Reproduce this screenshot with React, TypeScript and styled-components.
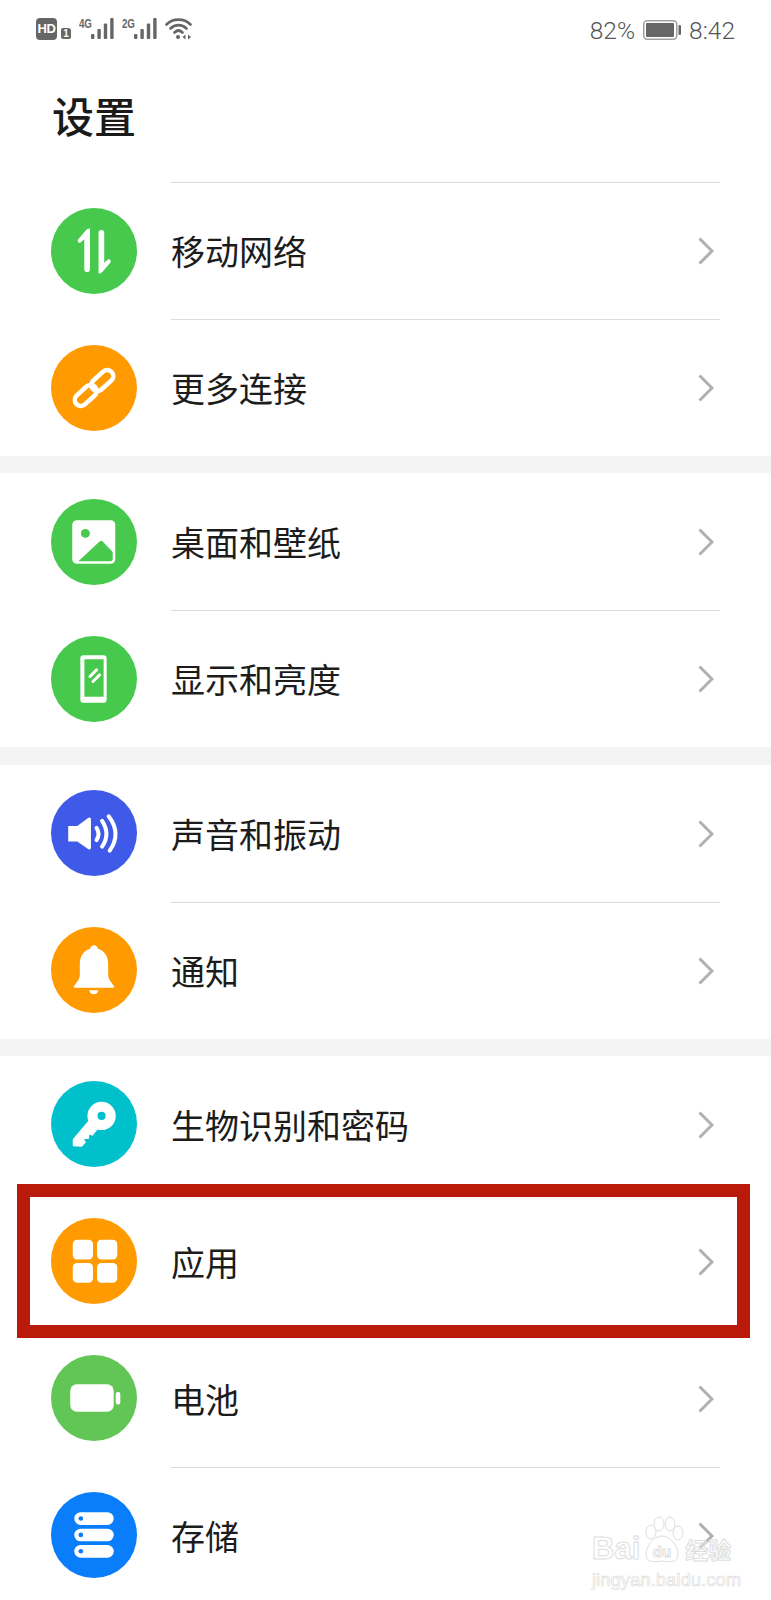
import React from 'react'
import styled, { createGlobalStyle } from 'styled-components'

const GlobalStyle = createGlobalStyle`
  html, body {
    margin: 0;
    padding: 0;
    background: #fff;
  }
  body {
    font-family: "Noto Sans CJK SC", "Noto Sans", sans-serif;
  }
`

const Page = styled.div`
  position: relative;
  width: 771px;
  height: 1600px;
  overflow: hidden;
  background: #fff;
`

const StatusBar = styled.div`
  height: 60px;
  padding: 18px 36px 0;
  box-sizing: border-box;
  display: flex;
  justify-content: space-between;
  align-items: flex-start;
  color: #666;
`

const StatusLeft = styled.div`
  display: flex;
  align-items: flex-start;
`

const StatusRight = styled.div`
  display: flex;
  align-items: center;
  height: 24px;
  font-family: Roboto, "Liberation Sans", sans-serif;
  font-size: 24.5px;
  font-weight: 300;
  color: #555;
  gap: 8px;
`

const HdBadge = styled.div`
  width: 21px;
  height: 22px;
  border-radius: 4px;
  background: #666;
  color: #fff;
  font-family: "Liberation Sans", sans-serif;
  font-weight: 700;
  font-size: 13px;
  line-height: 22px;
  text-align: center;
  letter-spacing: -0.5px;
`

const SimBadge = styled.div`
  width: 10px;
  height: 11px;
  margin: 10px 8px 0 4px;
  border-radius: 2px 3px 2px 2px;
  background: #666;
  color: #fff;
  font-family: "Liberation Sans", sans-serif;
  font-weight: 700;
  font-size: 10px;
  line-height: 11px;
  text-align: center;
`

const Signal = styled.div`
  display: flex;
  align-items: flex-start;
  margin-right: 8px;
`

const NetLabel = styled.span`
  width: 12px;
  font-family: "Liberation Sans", sans-serif;
  font-weight: 700;
  font-size: 13px;
  line-height: 11px;
  letter-spacing: -0.3px;
  color: #666;
  transform: scaleX(0.75);
  transform-origin: left top;
`

const Title = styled.h1`
  margin: 0;
  height: 122px;
  padding: 32px 0 0 52px;
  box-sizing: border-box;
  font-size: 42px;
  line-height: 46px;
  font-weight: 500;
  color: #1a1a1a;
`

const Band = styled.div`
  height: 17.3px;
  background: #f4f4f4;
`

const Row = styled.div`
  position: relative;
  height: 137px;
  display: flex;
  align-items: stretch;
  padding: 0 51px 0 51px;
`

const Circle = styled.div<{ $color: string }>`
  flex: none;
  align-self: center;
  width: 86px;
  height: 86px;
  margin-right: 34px;
  border-radius: 50%;
  background: ${p => p.$color};
  svg {
    display: block;
  }
`

const RowBody = styled.div<{ $plain?: boolean }>`
  flex: 1;
  display: flex;
  align-items: center;
  justify-content: space-between;
  padding-right: 6px;
  border-top: 1px solid ${p => (p.$plain ? 'transparent' : '#dcdcdc')};
`

const RowLabel = styled.span`
  font-size: 34px;
  line-height: 44px;
  color: #1c1c1c;
`

const Chevron = styled.svg`
  display: block;
  width: 16px;
  height: 28px;
`

const Highlight = styled.div`
  position: absolute;
  z-index: 2;
  top: -9px;
  bottom: -8px;
  left: 17px;
  right: 21px;
  border: 13px solid #ba1a0a;
  pointer-events: none;
`

const Watermark = styled.div`
  position: absolute;
  left: 592px;
  top: 1516px;
  width: 140px;
  pointer-events: none;
`

const MarkTop = styled.div`
  display: flex;
  align-items: flex-end;
  height: 50px;
`

const MarkWord = styled.span<{ $cjk?: boolean }>`
  font-family: ${p => (p.$cjk ? '"Noto Sans CJK SC"' : '"Liberation Sans"')}, sans-serif;
  font-weight: 700;
  font-size: ${p => (p.$cjk ? 23 : 31)}px;
  line-height: 34px;
  color: rgba(255, 255, 255, 0.4);
  -webkit-text-stroke: 1px #dedede;
`

const Paw = styled.svg`
  display: block;
  width: 44px;
  height: 50px;
  margin-right: 1px;
`

const MarkUrl = styled.div`
  margin-top: 4px;
  font-family: "Liberation Sans", sans-serif;
  font-size: 18.5px;
  line-height: 20px;
  color: rgba(255, 255, 255, 0.4);
  -webkit-text-stroke: 0.7px #dedede;
  white-space: nowrap;
`

const GREEN = '#46c94c'
const ORANGE = '#ff9a00'
const INDIGO = '#3f5ae8'
const TEAL = '#00c0cc'
const LIME = '#62c656'
const BLUE = '#0a7dfa'

function Bars() {
  return (
    <svg width="23" height="21" viewBox="0 0 23 21">
      <g fill="#666">
        <rect x="0" y="16" width="3.4" height="5" rx="1" />
        <rect x="6.4" y="11" width="3.4" height="10" rx="1" />
        <rect x="12.8" y="5.5" width="3.4" height="15.5" rx="1" />
        <rect x="19.2" y="0" width="3.4" height="21" rx="1" />
      </g>
    </svg>
  )
}

function Wifi() {
  return (
    <svg width="27" height="22" viewBox="0 0 27 22" fill="none" stroke="#666" strokeWidth="2.6" strokeLinecap="round">
      <path d="M1.5 6.5C8 0 19 0 25.5 6.5" />
      <path d="M5.5 10.5C10 6 17 6 21.5 10.5" />
      <path d="M9.5 14.5C12 12 15 12 17.5 14.5" />
      <circle cx="13" cy="19" r="2" fill="#666" stroke="none" />
      <path d="M20.5 16.5L17.5 19L20.5 21.5Z" fill="#666" stroke="none" />
      <path d="M23 16.5L26 19L23 21.5Z" fill="#666" stroke="none" />
    </svg>
  )
}

function Battery() {
  return (
    <svg width="38" height="20" viewBox="0 0 38 20">
      <rect x="0.75" y="0.75" width="33" height="18.5" rx="3.5" fill="none" stroke="#a0a0a0" strokeWidth="1.5" />
      <rect x="3" y="3" width="28" height="14" rx="1" fill="#666" />
      <rect x="35.5" y="5" width="2.5" height="10" rx="1" fill="#666" />
    </svg>
  )
}

function Glyph({ children }: { children: React.ReactNode }) {
  return (
    <svg width="86" height="86" viewBox="0 0 85 85">
      {children}
    </svg>
  )
}

const icons: Record<string, React.ReactNode> = {
  arrows: (
    <Glyph>
      <path d="M38.5 20.5V60.5a2.8 2.8 0 0 1-5.6 0V31L28.5 34.5Q26 34 26.5 31.5L35 21.5Q37.5 19.5 38.5 20.5Z" fill="#fff" />
      <path d="M47 64.5V24.5a2.8 2.8 0 0 1 5.6 0V54L57 50.5Q59.5 51 59 53.5L50.5 63.5Q48 65.5 47 64.5Z" fill="#fff" />
    </Glyph>
  ),
  link: (
    <Glyph>
      <g fill="none" stroke="#fff" strokeWidth="4.5" transform="rotate(-42 42.5 42.5)">
        <rect x="19" y="36.5" width="25" height="12" rx="6" />
        <rect x="41" y="36.5" width="25" height="12" rx="6" />
      </g>
    </Glyph>
  ),
  image: (
    <Glyph>
      <rect x="21" y="21" width="42.5" height="43" rx="4.5" fill="#fff" />
      <circle cx="34" cy="34" r="4.4" fill={GREEN} />
      <path d="M27 61.5L48 42Q49.5 40.5 51 42L61 52.5V59.5Q61 61.5 59 61.5Z" fill={GREEN} />
    </Glyph>
  ),
  phone: (
    <Glyph>
      <rect x="29" y="19" width="26" height="47" rx="3" fill="#fff" />
      <rect x="33" y="23" width="19" height="37" fill={GREEN} />
      <g stroke="#fff" strokeWidth="3" strokeLinecap="round">
        <path d="M38.5 40L45 33.5" />
        <path d="M41.5 45L48 38.5" />
      </g>
    </Glyph>
  ),
  sound: (
    <Glyph>
      <path d="M17 35.5H26L37 27.5Q39.5 26.5 39.5 29V57Q39.5 59.5 37 58.5L26 51H17Z" fill="#fff" />
      <g fill="none" stroke="#fff" strokeWidth="4" strokeLinecap="round">
        <path d="M45 37.5Q49 43.5 45 49.5" />
        <path d="M50.5 30.5Q59 43.5 50.5 56" />
        <path d="M57 26Q70 43 58 60" />
      </g>
    </Glyph>
  ),
  bell: (
    <Glyph>
      <path
        d="M42.5 18c-2 0-3.6 1.5-3.6 3.2C32.5 23 28.5 29 28.5 36V47C28.5 52 25 55 22.6 58.6Q21.8 60 23.4 60H61.6Q63.2 60 62.4 58.6C60 55 56.5 52 56.5 47V36C56.5 29 52.5 23 46.1 21.2C46.1 19.5 44.5 18 42.5 18Z"
        fill="#fff"
      />
      <path d="M37.8 62.5H46.8Q46 66.5 42.3 66.5Q38.6 66.5 37.8 62.5Z" fill="#fff" />
    </Glyph>
  ),
  key: (
    <Glyph>
      <circle cx="50" cy="34.5" r="14" fill="#fff" />
      <circle cx="50" cy="34.5" r="4" fill={TEAL} />
      <path d="M38 38L21.5 57.5L21.5 64.5L30.5 65L34.5 60.5L32.5 57.5L37.5 57L38 53L41 54L46 48Z" fill="#fff" />
    </Glyph>
  ),
  apps: (
    <Glyph>
      <g fill="#fff">
        <rect x="21.5" y="21.5" width="20" height="19.5" rx="4.5" />
        <rect x="45.5" y="21.5" width="20" height="19.5" rx="4.5" />
        <rect x="21.5" y="44.5" width="20" height="19.5" rx="4.5" />
        <rect x="45.5" y="44.5" width="20" height="19.5" rx="4.5" />
      </g>
    </Glyph>
  ),
  battery: (
    <Glyph>
      <rect x="19" y="29" width="43" height="27" rx="6.5" fill="#fff" />
      <rect x="64" y="36.5" width="4.5" height="12.5" rx="2" fill="#fff" />
    </Glyph>
  ),
  storage: (
    <Glyph>
      <g fill="#fff">
        <rect x="23" y="20" width="39" height="12.5" rx="6.25" />
        <rect x="23" y="36.2" width="39" height="12.5" rx="6.25" />
        <rect x="23" y="52.4" width="39" height="12.5" rx="6.25" />
      </g>
      <g fill={BLUE}>
        <circle cx="29.5" cy="26.2" r="2.3" />
        <circle cx="29.5" cy="42.4" r="2.3" />
        <circle cx="29.5" cy="58.6" r="2.3" />
      </g>
    </Glyph>
  )
}

type Item = { label: string; color: string; icon: string; marked?: boolean }

const groups: Item[][] = [
  [
    { label: '移动网络', color: GREEN, icon: 'arrows' },
    { label: '更多连接', color: ORANGE, icon: 'link' }
  ],
  [
    { label: '桌面和壁纸', color: GREEN, icon: 'image' },
    { label: '显示和亮度', color: GREEN, icon: 'phone' }
  ],
  [
    { label: '声音和振动', color: INDIGO, icon: 'sound' },
    { label: '通知', color: ORANGE, icon: 'bell' }
  ],
  [
    { label: '生物识别和密码', color: TEAL, icon: 'key' },
    { label: '应用', color: ORANGE, icon: 'apps', marked: true },
    { label: '电池', color: LIME, icon: 'battery' },
    { label: '存储', color: BLUE, icon: 'storage' }
  ]
]

function SettingRow({ item, plain }: { item: Item; plain?: boolean }) {
  return (
    <Row>
      <Circle $color={item.color}>{icons[item.icon]}</Circle>
      <RowBody $plain={plain}>
        <RowLabel>{item.label}</RowLabel>
        <Chevron viewBox="0 0 16 28" fill="none" stroke="#b0b0b0" strokeWidth="3">
          <path d="M1.5 1.5L14 14L1.5 26.5" />
        </Chevron>
      </RowBody>
      {item.marked && <Highlight />}
    </Row>
  )
}

export default function App() {
  return (
    <Page>
      <GlobalStyle />
      <StatusBar>
        <StatusLeft>
          <HdBadge>HD</HdBadge>
          <SimBadge>1</SimBadge>
          <Signal>
            <NetLabel>4G</NetLabel>
            <Bars />
          </Signal>
          <Signal>
            <NetLabel>2G</NetLabel>
            <Bars />
          </Signal>
          <Wifi />
        </StatusLeft>
        <StatusRight>
          <span>82%</span>
          <Battery />
          <span>8:42</span>
        </StatusRight>
      </StatusBar>
      <Title>设置</Title>
      {groups.map((group, g) => (
        <div key={g}>
          {g > 0 && <Band />}
          {group.map((item, i) => (
            <SettingRow key={item.label} item={item} plain={i === 0 && g > 0} />
          ))}
        </div>
      ))}
      <Watermark>
        <MarkTop>
          <MarkWord>Bai</MarkWord>
          <Paw viewBox="0 0 44 50" fill="rgba(255,255,255,0.4)" stroke="#dedede" strokeWidth="1">
            <ellipse cx="11" cy="16" rx="5" ry="7" />
            <ellipse cx="19" cy="8" rx="5" ry="7" />
            <ellipse cx="30" cy="8" rx="5" ry="7" />
            <ellipse cx="38" cy="17" rx="5" ry="7" />
            <path d="M22 20C30 20 38 30 38 38C38 47 30 46 22 45C14 46 6 47 6 38C6 30 14 20 22 20Z" />
            <text x="22" y="41" textAnchor="middle" fontFamily="Liberation Sans, sans-serif" fontSize="15" fontWeight="700">
              du
            </text>
          </Paw>
          <MarkWord $cjk>经验</MarkWord>
        </MarkTop>
        <MarkUrl>jingyan.baidu.com</MarkUrl>
      </Watermark>
    </Page>
  )
}
